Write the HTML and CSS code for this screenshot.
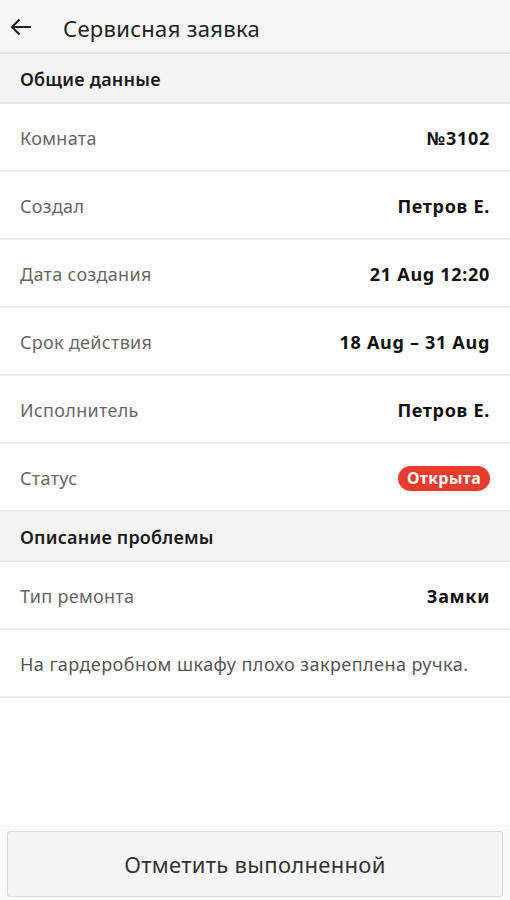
FILE: index.html
```html
<!DOCTYPE html>
<html lang="ru">
<head>
<meta charset="utf-8">
<link rel="stylesheet" href="styles.css">
</head>
<body>
<div class="app">
  <header class="topbar">
    <svg class="back" width="22" height="18" viewBox="0 0 22 18"><path d="M21 9H2M9.5 1.5L2 9l7.5 7.5" fill="none" stroke="#222" stroke-width="2"/></svg>
    <h1 class="title">Сервисная заявка</h1>
  </header>
  <main class="content">
    <div class="section">Общие данные</div>
    <div class="row"><span class="label">Комната</span><span class="value">№3102</span></div>
    <div class="row"><span class="label">Создал</span><span class="value">Петров Е.</span></div>
    <div class="row"><span class="label">Дата создания</span><span class="value">21 Aug 12:20</span></div>
    <div class="row"><span class="label">Срок действия</span><span class="value">18 Aug – 31 Aug</span></div>
    <div class="row"><span class="label">Исполнитель</span><span class="value">Петров Е.</span></div>
    <div class="row"><span class="label">Статус</span><span class="badge">Открыта</span></div>
    <div class="section">Описание проблемы</div>
    <div class="row"><span class="label">Тип ремонта</span><span class="value">Замки</span></div>
    <div class="row"><span class="desc">На гардеробном шкафу плохо закреплена ручка.</span></div>
  </main>
  <footer class="footer">
    <button class="action">Отметить выполненной</button>
  </footer>
</div>
</body>
</html>
```
FILE: styles.css
```css
* { box-sizing: border-box; }
html, body { margin: 0; padding: 0; }
body {
  font-family: "Noto Sans", "Open Sans", sans-serif;
  background: #fff;
  color: #111;
}
.app {
  height: 900px;
  display: flex;
  flex-direction: column;
}
.topbar {
  height: 54px;
  background: #f7f7f7;
  border-bottom: 2px solid #e2e2e2;
  display: flex;
  align-items: center;
  padding-left: 10px;
  padding-top: 3px;
}
.back { display: block; margin-top: -1px; }
.title {
  margin: 0 0 0 31px;
  font-size: 22px;
  font-weight: 400;
  color: #222;
  letter-spacing: 0.3px;
}
.content { flex: 1; }
.section {
  height: 50px;
  background: #f4f4f4;
  border-bottom: 2px solid #e8e8e8;
  display: flex;
  align-items: center;
  padding: 2px 20px 0;
  font-size: 18px;
  font-weight: 600;
  color: #1a1a1a;
  letter-spacing: 0.2px;
}
.row {
  height: 68px;
  border-bottom: 2px solid #ececec;
  display: flex;
  align-items: center;
  justify-content: space-between;
  padding: 2px 20px 0;
  font-size: 18px;
}
.label { color: #666; letter-spacing: 0.3px; }
.value { font-weight: 700; color: #111; letter-spacing: 0.7px; }
.desc { color: #555; letter-spacing: 0.45px; }
.badge {
  background: #e53c2e;
  color: #fff;
  font-weight: 700;
  font-size: 16px;
  border-radius: 13px;
  padding: 1px 9px 2px;
  line-height: 22px;
  letter-spacing: 0.3px;
}
.footer {
  height: 75px;
  background: #fafafa;
  padding: 6px 7px 3px;
}
.action {
  width: 100%;
  height: 100%;
  background: #f5f5f5;
  border: 1px solid #d8d8d8;
  border-radius: 3px;
  font-family: inherit;
  font-size: 22px;
  color: #333;
  letter-spacing: 0.3px;
}
```
